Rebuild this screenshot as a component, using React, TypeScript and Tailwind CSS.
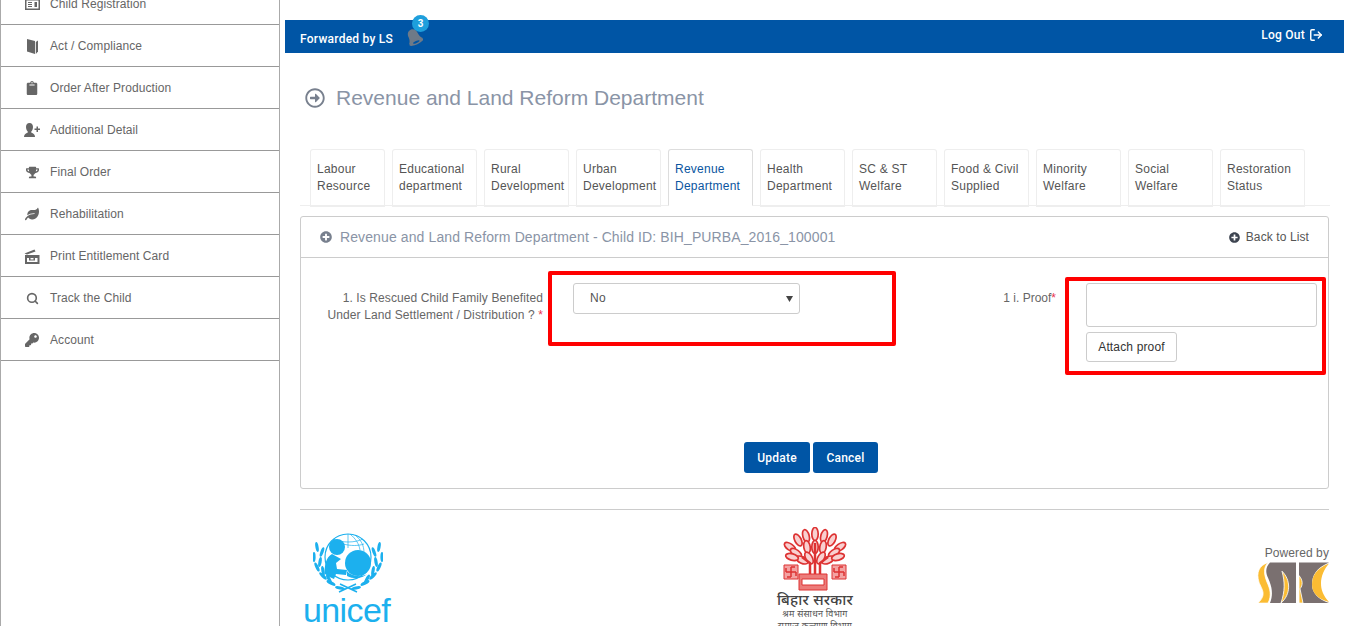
import React from "react";
import { FaClipboard, FaKey, FaLeaf, FaPlusCircle, FaRegArrowAltCircleRight, FaTrophy } from "react-icons/fa";
import { LogOut, Search } from "lucide-react";

const fontClass = "font-['Liberation_Sans',Arial,sans-serif]";

// Small glyphs the icon packs have no close match for
const IdCardIcon = () => (
  <svg width="15" height="12" viewBox="0 0 15 12" fill="#666">
    <path d="M0 0h15v12H0zM1.500 2.500v8h12v-8z" fillRule="evenodd" />
    <path d="M3 4h4v1H3zM3 6h4v1H3zM3 8h4v1H3zM9.500 4h2.500v5H9.500z" />
  </svg>
);

const BookIcon = () => (
  <svg width="11" height="15" viewBox="0 0 11 15" fill="#666">
    <path d="M0 0l8 2v13l-8-2.500z" />
    <path d="M8.800 3L11 1.500V12.500L8.800 15z" />
  </svg>
);

const UserAddIcon = () => (
  <svg width="16" height="14" viewBox="0 0 16 14" fill="#666">
    <path d="M5.500 0C8 0 9 2 9 4c0 2-1 4-2 5 0 1 4 1 4 5H0c0-4 4-4 4-5C3 8 2 6 2 4c0-2 1-4 3.500-4z" />
    <path d="M10.500 5.500H12.500V3.500H14V5.500H16V7H14V9H12.500V7H10.500z" />
  </svg>
);

const TicketIcon = () => (
  <svg width="16" height="15" viewBox="0 0 16 15" fill="#666">
    <path d="M0.500 4.500L10.500 0.500L11.500 2.500L3 5.500z" />
    <path d="M1 6H15.500V15H1zM3 9V13H13.500V9z" fillRule="evenodd" />
    <path d="M5 9h1.500v1.500h3V9H11v2.500H5z" />
  </svg>
);

const BellIcon = () => (
  <svg width="18" height="18" viewBox="0 0 18 18">
    <g transform="rotate(-25 9 9)">
      <path d="M9 1C5.500 1 4 4 4 7c0 3-1 5-2.500 6.500h15C15 12 14 10 14 7c0-3-1.500-6-5-6z" fill="#6e7a88" />
      <ellipse cx="9" cy="14.500" rx="7.500" ry="2.500" fill="#6e7a88" />
      <ellipse cx="9" cy="14.500" rx="3.500" ry="1" fill="#0055a5" />
    </g>
  </svg>
);

const menuItems = [
  { label: "Child Registration", icon: <IdCardIcon /> },
  { label: "Act / Compliance", icon: <BookIcon /> },
  { label: "Order After Production", icon: <FaClipboard size={14} color="#666" /> },
  { label: "Additional Detail", icon: <UserAddIcon /> },
  { label: "Final Order", icon: <FaTrophy size={13} color="#666" /> },
  { label: "Rehabilitation", icon: <FaLeaf size={14} color="#666" /> },
  { label: "Print Entitlement Card", icon: <TicketIcon /> },
  { label: "Track the Child", icon: <Search size={13} strokeWidth={3} color="#666" /> },
  { label: "Account", icon: <FaKey size={14} color="#666" /> },
];

const tabs = [
  { top: "Labour", bottom: "Resource", width: "w-[75px]" },
  { top: "Educational", bottom: "department", width: "w-[85px]" },
  { top: "Rural", bottom: "Development", width: "w-[85px]" },
  { top: "Urban", bottom: "Development", width: "w-[85px]" },
  { top: "Revenue", bottom: "Department", width: "w-[85px]", active: true },
  { top: "Health", bottom: "Department", width: "w-[85px]" },
  { top: "SC & ST", bottom: "Welfare", width: "w-[85px]" },
  { top: "Food & Civil", bottom: "Supplied", width: "w-[85px]" },
  { top: "Minority", bottom: "Welfare", width: "w-[85px]" },
  { top: "Social", bottom: "Welfare", width: "w-[85px]" },
  { top: "Restoration", bottom: "Status", width: "w-[85px]" },
];

// Wreath leaves, one list for each side, mirrored round the middle
const wreathLeaves = [
  [4, 14, -10], [1, 24, 0], [4, 34, -25], [10, 43, -45], [18, 50, -62], [27, 55, -78],
  [9, 19, 20], [7, 29, 10], [10, 38, -10], [16, 46, -30],
];

const UnicefLogo = () => (
  <div className="flex flex-col items-start w-[90px]">
    <svg width="70" height="60" viewBox="0 0 70 60" className="ml-[10px]">
      <g fill="#1cb0ee">
        {wreathLeaves.map(([x, y, r]) => (
          <ellipse key={`l${x}-${y}`} cx={x} cy={y} rx="1.600" ry="5" transform={`rotate(${r} ${x} ${y})`} />
        ))}
        {wreathLeaves.map(([x, y, r]) => (
          <ellipse key={`r${x}-${y}`} cx={70 - x} cy={y} rx="1.600" ry="5" transform={`rotate(${-r} ${70 - x} ${y})`} />
        ))}
      </g>
      <circle cx="35" cy="24" r="23" fill="#fff" stroke="#1cb0ee" strokeWidth="1.200" />
      <path d="M35 1v14M20 6c8 4 22 4 30 0M37 1c6 5 9 10 10 16M42 2c6 5 9 10 9 18M30 11c8 2 15 2 21 0" fill="none" stroke="#1cb0ee" strokeWidth="0.700" />
      <circle cx="45" cy="30" r="13" fill="#1cb0ee" />
      <path d="M34 38c4 5 14 7 20 3-4 4-12 6-20 2z" fill="#1cb0ee" />
      <circle cx="24" cy="14" r="8" fill="#1cb0ee" />
      <path d="M19 21c-6 3-8 12-7 20 3 2 6 4 9 5l2-5 10 1 1-5-10-1-1-6 5-4z" fill="#1cb0ee" />
      <path d="M26 59l17-8M44 59L27 51" fill="none" stroke="#1cb0ee" strokeWidth="1.500" />
    </svg>
    <span className="text-[34px] leading-[30px] mt-[2px] text-[#1cb0ee] tracking-[-0.6px]">unicef</span>
  </div>
);

const treeLeaves = [
  [33, 7, 0], [24, 9, -15], [42, 9, 15], [16, 13, -28], [50, 13, 28], [8, 20, -55], [58, 20, 55],
  [14, 26, -55], [52, 26, 55], [25, 20, -10], [41, 20, 10], [20, 33, -65], [46, 33, 65], [33, 20, 0],
  [27, 31, -30], [39, 31, 30], [10, 30, -75], [56, 30, 75],
];

const BiharLogo = () => (
  <div className="flex flex-col items-center w-[100px]">
    <svg width="66" height="64" viewBox="0 0 66 64">
      <g fill="#f9cfcf" stroke="#dd3232" strokeWidth="1.700">
        {treeLeaves.map(([x, y, r]) => (
          <ellipse key={`${x}-${y}`} cx={x} cy={y} rx="3.200" ry="6.500" transform={`rotate(${r} ${x} ${y})`} />
        ))}
      </g>
      <path d="M28 48V36L20 30M38 48V36l8-6M33 48V16" fill="none" stroke="#dd3232" strokeWidth="2.500" />
      <path d="M17 47h28v16H17z" fill="#ec7c7a" stroke="#dd3232" />
      <path d="M20 52h22v6H20z" fill="#fff" stroke="#dd3232" />
      <path d="M2 38h14v14H2zM50 38h14v14H50z" fill="#f3a2a2" stroke="#dd3232" />
      <path d="M9 40v10M4 45h10M4 41v4M14 49v-4M9 40h4M9 50H5M57 40v10M52 45h10M52 41v4M62 49v-4M57 40h4M57 50h-4" fill="none" stroke="#dd3232" strokeWidth="1.500" />
    </svg>
    <span className="text-[15px] leading-[17px] font-medium text-[#444] font-['Noto_Sans','Liberation_Sans',sans-serif]">बिहार सरकार</span>
    <span className="text-[9px] leading-[12px] text-[#555] font-['Noto_Sans','Liberation_Sans',sans-serif]">श्रम संसाधन विभाग</span>
    <span className="text-[9px] leading-[12px] text-[#555] font-['Noto_Sans','Liberation_Sans',sans-serif]">समाज कल्याण विभाग</span>
  </div>
);

const SdrcLogo = () => (
  <svg width="78" height="55" viewBox="0 0 78 50" preserveAspectRatio="none">
    <path d="M17 4H43V41H17C21 32 18 24 15 18 12 12 13 8 17 4z" fill="#7a7070" />
    <path d="M15 4C6 7 3 13 6 22 9 29 14 33 5 41H15C19 34 17 28 14 22 11 15 10 9 15 4z" fill="#fbbc33" stroke="#fff" strokeWidth="0.700" />
    <path d="M29 12C38 20 38 33 28 41 32 30 32 22 29 12z" fill="#fbbc33" stroke="#fff" strokeWidth="0.800" />
    <path d="M46 4H76C63 9 59 16 59 24 59 32 65 37 76 41H46z" fill="#7a7070" />
    <path d="M46 16C50 20 50 25 47 28L50 41H46z" fill="#fbbc33" stroke="#fff" strokeWidth="0.800" />
    <path d="M76 5C64 9 59 16 59 24 59 32 65 37 76 40 70 34 68 29 68 23 68 17 71 10 76 5z" fill="#fbbc33" />
  </svg>
);

export default function App() {
  return (
    <div className={`flex h-[626px] w-full overflow-hidden bg-white text-[12px] tracking-[0.25px] text-[#666] ${fontClass}`}>
      {/* Sidebar, page is scrolled a little so the first row is cut off */}
      <aside className="w-[280px] shrink-0 h-[660px] -mt-[17px] border-x border-[#aaa] tracking-[0.08px]">
        {menuItems.map((item) => (
          <div key={item.label} className="flex items-center h-[42px] pt-[1px] border-b border-[#999]">
            <span className="flex justify-center w-[16px] ml-[23px] mr-[10px]">{item.icon}</span>
            <span>{item.label}</span>
          </div>
        ))}
      </aside>

      <main className="flex-1 min-w-0 px-[5px] pt-[20px]">
        <div className="flex items-center justify-between h-[33px] bg-[#0055a5] text-white pl-[15px] pr-[21px]">
          <div className="flex items-center pt-[5px]">
            <span className="font-['Roboto',sans-serif] font-medium">Forwarded by LS</span>
            <span className="relative ml-[12px] -mt-[5px]">
              <BellIcon />
              <span className="absolute -top-[13px] left-[7px] flex items-center justify-center w-[17px] h-[17px] rounded-full bg-[#1e9fdc] text-[10px] font-bold text-white tracking-normal">3</span>
            </span>
          </div>
          <div className="flex items-center -mt-[3px] font-['Roboto',sans-serif] font-medium">
            <span>Log Out</span>
            <LogOut size={14} strokeWidth={2.5} className="ml-[4px]" />
          </div>
        </div>

        <div className="flex items-center h-[96px] pl-[20px] pb-[7px] text-[#8a94a6]">
          <FaRegArrowAltCircleRight size={20} color="#78808e" />
          <h1 className="ml-[11px] text-[21px] tracking-normal font-normal">Revenue and Land Reform Department</h1>
        </div>

        <div className="ml-[15px] mr-[14px] flex gap-[7px] pl-[10px] h-[57px] border-b border-[#eee]">
          {tabs.map((tab) => (
            <div
              key={tab.top}
              className={
                tab.active
                  ? `${tab.width} h-[57px] shrink-0 pl-[6px] pt-[11px] leading-[17px] rounded-t-[3px] border border-[#ddd] border-b-white bg-white text-[#0a55a0]`
                  : `${tab.width} h-[58px] shrink-0 pl-[6px] pt-[11px] leading-[17px] rounded-t-[3px] border border-[#eee] border-b-2 text-[#555]`
              }
            >
              <div className="whitespace-nowrap">{tab.top}</div>
              <div className="whitespace-nowrap">{tab.bottom}</div>
            </div>
          ))}
        </div>

        <section className="ml-[15px] mr-[15px] mt-[10px] h-[273px] border border-[#ccc] rounded-[3px] flex flex-col">
          <div className="flex items-center justify-between h-[41px] shrink-0 border-b border-[#ccc] pl-[19px] pr-[19px]">
            <div className="flex items-center text-[14px] tracking-[0.11px] text-[#8a94a6]">
              <FaPlusCircle size={12} color="#78808e" />
              <span className="ml-[8px]">Revenue and Land Reform Department - Child ID: BIH_PURBA_2016_100001</span>
            </div>
            <div className="flex items-center text-[#555] tracking-[0.1px]">
              <FaPlusCircle size={11} color="#3d4450" />
              <span className="ml-[6px]">Back to List</span>
            </div>
          </div>

          <div className="flex justify-between flex-1 pt-[25px] pr-[11px]">
            <div className="relative flex h-[31px]">
              <label className="w-[242px] pt-[7px] text-right leading-[17px] tracking-[0.1px] whitespace-nowrap">
                1. Is Rescued Child Family Benefited
                <br />
                Under Land Settlement / Distribution ? <span className="text-[#e8344e]">*</span>
              </label>
              <div className="ml-[30px] w-[227px] h-[31px] flex items-center justify-between pl-[16px] pr-[6px] pb-[1px] border border-[#ccc] rounded-[3px] text-[#555]">
                <span>No</span>
                <svg width="7" height="7" viewBox="0 0 7 7" fill="#444"><path d="M0 1h7L3.500 7z" /></svg>
              </div>
              {/* Annotation drawn over the form */}
              <div className="absolute left-[247px] -top-[12px] w-[348px] h-[75px] border-[4px] border-[#ff0000] rounded-[2px]" />
            </div>

            <div className="relative flex">
              <label className="pt-[7px] leading-[17px] tracking-normal">1 i. Proof<span className="text-[#e8344e]">*</span></label>
              <div className="ml-[30px] w-[231px]">
                <div className="h-[44px] border border-[#ccc] rounded-[3px]" />
                <button className="mt-[5px] w-[91px] h-[30px] border border-[#ccc] rounded-[3px] text-[#333] tracking-[0.15px]">Attach proof</button>
              </div>
              <div className="absolute -right-[9px] -top-[6px] w-[261px] h-[98px] border-[4px] border-[#ff0000] rounded-[2px]" />
            </div>
          </div>

          <div className="flex justify-center gap-[3px] pb-[15px] pr-[7px]">
            <button className="w-[66px] h-[31px] bg-[#0055a5] rounded-[3px] text-white font-['Roboto',sans-serif] font-medium">Update</button>
            <button className="w-[65px] h-[31px] bg-[#0055a5] rounded-[3px] text-white font-['Roboto',sans-serif] font-medium">Cancel</button>
          </div>
        </section>

        <footer className="ml-[15px] mr-[15px] mt-[20px] border-t border-[#ccc] flex justify-between pt-[23px] pl-[3px]">
          <UnicefLogo />
          <div className="-mt-[6px] mr-[16px]"><BiharLogo /></div>
          <div className="flex flex-col items-end pt-[13px]">
            <span className="tracking-[0.1px] leading-[14px]">Powered by</span>
            <div className="-mr-[2px] -mt-[2px]"><SdrcLogo /></div>
          </div>
        </footer>
      </main>
    </div>
  );
}
